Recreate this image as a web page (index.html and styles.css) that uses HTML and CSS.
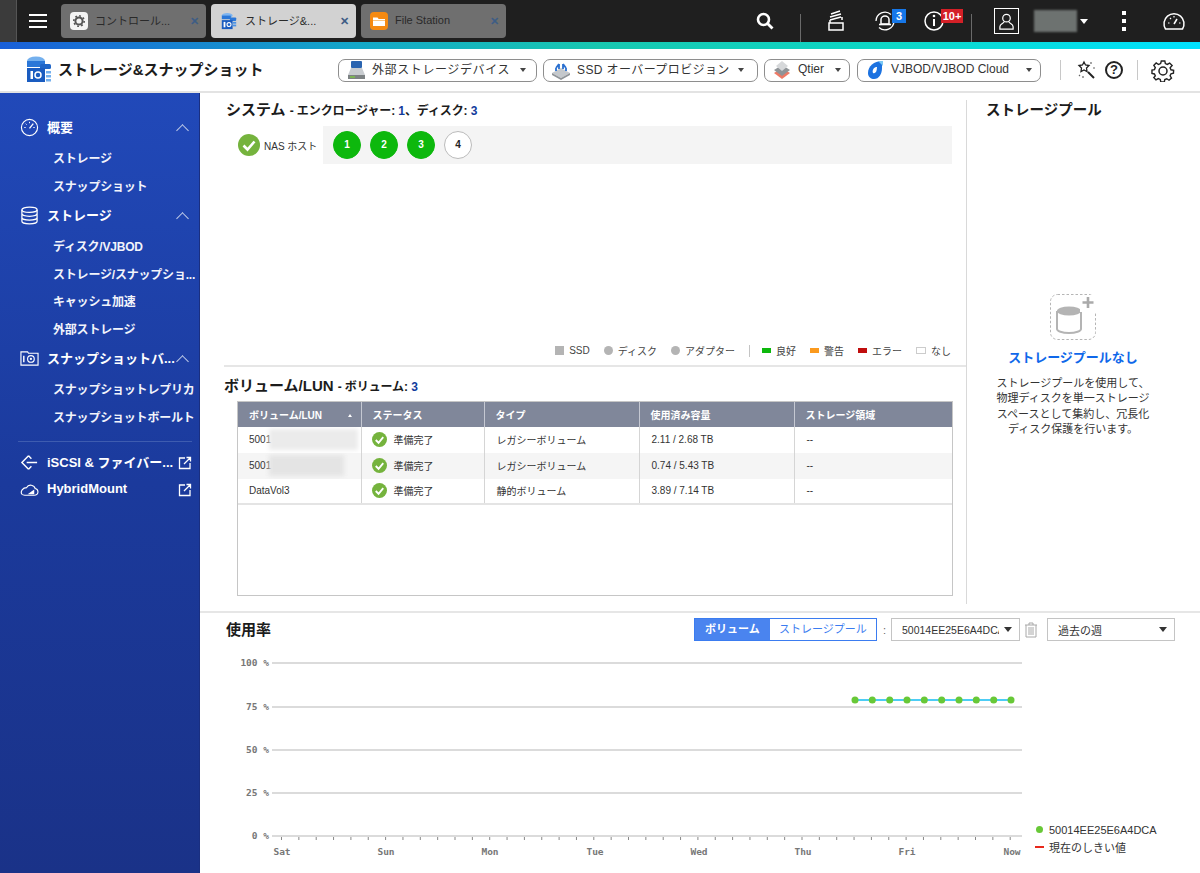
FILE: index.html
```html
<!DOCTYPE html>
<html lang="ja">
<head>
<meta charset="utf-8">
<title>ストレージ&amp;スナップショット</title>
<link rel="stylesheet" href="styles.css">
</head>
<body>
<div class="app">
  <header class="topbar">
    <div class="corner"></div>
    <div class="burger"><span></span><span></span><span></span></div>
    <div class="tabs">
      <div class="tab">
        <svg class="tabicon" viewBox="0 0 18 18"><rect width="18" height="18" rx="4" fill="#f4f4f4"/><circle cx="9" cy="9" r="3.6" fill="none" stroke="#555" stroke-width="2"/><circle cx="9" cy="9" r="5.2" fill="none" stroke="#555" stroke-width="1.6" stroke-dasharray="1.8 2.2"/></svg>
        <span class="tabtext">コントロール...</span><span class="tabx">✕</span>
      </div>
      <div class="tab active">
        <svg class="tabicon" viewBox="0 0 18 20"><ellipse cx="7" cy="4" rx="6" ry="3" fill="#7db4f0"/><rect x="1" y="4" width="10" height="4" fill="#2a77d8"/><rect x="10" y="6" width="7" height="4" rx="1" fill="#2a77d8"/><rect x="1" y="9" width="12" height="10" fill="#1a5cc0"/><rect x="13" y="11" width="4" height="2" fill="#4a92e6"/><rect x="13" y="14" width="4" height="2" fill="#4a92e6"/><rect x="3" y="11" width="2" height="6" fill="#fff"/><circle cx="9" cy="14" r="2.2" fill="none" stroke="#fff" stroke-width="1.2"/></svg>
        <span class="tabtext">ストレージ&amp;...</span><span class="tabx">✕</span>
      </div>
      <div class="tab">
        <svg class="tabicon" viewBox="0 0 18 18"><rect width="18" height="18" rx="4" fill="#f58a12"/><path d="M3 5.5h4.5l1.2 1.5H15v7H3z" fill="#fff"/><path d="M3 8h12v1H3z" fill="#f9c37e"/></svg>
        <span class="tabtext">File Station</span><span class="tabx">✕</span>
      </div>
    </div>
    <div class="tools">
      <svg class="t-search" viewBox="0 0 18 18"><circle cx="7.5" cy="7.5" r="5.5" fill="none" stroke="#fff" stroke-width="2.6"/><path d="M11.5 11.5l5 5" stroke="#fff" stroke-width="2.8"/></svg>
      <i class="t-sep one"></i>
      <svg class="t-stack" viewBox="0 0 18 22"><path d="M2 13h14v7H2zM3 10l11-3M3 7l11-3M4 4l9-3M3 13v-3M15 7v3" fill="none" stroke="#fff" stroke-width="1.5"/></svg>
      <div class="t-badged bg">
        <svg viewBox="0 0 22 22"><path d="M2 11a9 9 0 0 1 15-6.500M20 11a9 9 0 0 1-15 6.500" fill="none" stroke="#fff" stroke-width="1.3"/><path d="M7 14V9.500a4 3.500 0 0 1 8 0V14z" fill="none" stroke="#fff" stroke-width="1.500"/><path d="M5 14.500h12" stroke="#fff" stroke-width="1.600"/></svg>
        <b class="badge blue">3</b>
      </div>
      <div class="t-badged info">
        <svg viewBox="0 0 22 22"><circle cx="11" cy="11" r="9" fill="none" stroke="#fff" stroke-width="1.5"/><path d="M11 9v7" stroke="#fff" stroke-width="2"/><circle cx="11" cy="6" r="1.3" fill="#fff"/></svg>
        <b class="badge red">10+</b>
      </div>
      <i class="t-sep two"></i>
      <div class="avatar"><svg viewBox="0 0 18 20"><circle cx="9" cy="6.5" r="4" fill="none" stroke="#fff" stroke-width="1.3"/><path d="M6.5 10c0 2-4.500 2.500-4.500 5.500V18h14v-2.500C16 12.500 11.500 12 11.500 10" fill="none" stroke="#fff" stroke-width="1.3"/></svg></div>
      <div class="userblur"></div>
      <i class="caret white"></i>
      <div class="dots"><span></span><span></span><span></span></div>
      <svg class="t-gauge" viewBox="0 0 24 22"><path d="M3.500 19a10 10 0 1 1 17 0z" fill="none" stroke="#fff" stroke-width="1.5"/><path d="M12 14l3-5" stroke="#fff" stroke-width="1.5"/><path d="M6 13h1.500M17 13h1.500M8 8l1 1M12 6v1.500" stroke="#fff" stroke-width="1.200"/></svg>
    </div>
  </header>
  <div class="rainbow"></div>
  <div class="apphead">
    <svg class="logo" viewBox="0 0 28 28"><ellipse cx="11" cy="5" rx="9" ry="4.500" fill="#74b0ee"/><rect x="2" y="5" width="18" height="6" fill="#2a77d8"/><rect x="15" y="8" width="11" height="5" rx="1.500" fill="#1f66c8"/><rect x="2" y="12" width="18" height="14" fill="#1a5cc0"/><rect x="21" y="15" width="5" height="2.500" fill="#74b0ee"/><rect x="21" y="19" width="5" height="2.500" fill="#74b0ee"/><rect x="21" y="23" width="5" height="2.500" fill="#74b0ee"/><rect x="5.500" y="15" width="2.500" height="8" fill="#fff"/><circle cx="13" cy="19" r="3" fill="none" stroke="#fff" stroke-width="1.500"/></svg>
    <h1 class="apptitle">ストレージ&amp;スナップショット</h1>
    <div class="headbtns">
      <div class="hbtn w-ext">
        <svg class="hi" viewBox="0 0 20 20"><rect x="5" y="1" width="11" height="7" rx="1" fill="#2a64b0"/><path d="M5 8h11l3 7H2z" fill="#c8ccd0"/><rect x="2" y="15" width="17" height="4" fill="#7d8284"/><rect x="4" y="16.200" width="5" height="1.600" fill="#7cc04a"/></svg>
        <span>外部ストレージデバイス</span><i class="caret"></i>
      </div>
      <div class="hbtn w-ssd">
        <svg class="hi" viewBox="0 0 20 20"><path d="M1 13l9-5 9 5-9 5z" fill="#c4c8cc"/><path d="M1 13v2l9 5 9-5v-2l-9 5z" fill="#8f9498"/><path d="M5 8v3M8 4v5M12 4v5M15 8v3M5 8l3-4M15 8l-3-4" stroke="#2a70d0" stroke-width="1.800" fill="none"/></svg>
        <span>SSD オーバープロビジョン</span><i class="caret"></i>
      </div>
      <div class="hbtn w-qt">
        <svg class="hi" viewBox="0 0 20 20"><path d="M2 13l8-5 8 5-8 6z" fill="#ec7a66"/><path d="M2 10l8-5 8 5-8 6z" fill="#8f9498"/><path d="M4 6l6-5 6 5-6 5z" fill="#d6d8da"/></svg>
        <span>Qtier</span><i class="caret"></i>
      </div>
      <div class="hbtn w-vj">
        <svg class="hi" viewBox="0 0 20 20"><path d="M17 1C9 1 3 6 3 13c0 4 3 6 6 6 5 0 8-5 8-11z" fill="#1c72e0"/><path d="M11 7c-3 1-4 4-3 6 2 1 4-1 4-6z" fill="#fff"/><path d="M13 1h5v5z" fill="#7cc8f4"/></svg>
        <span>VJBOD/VJBOD Cloud</span><i class="caret"></i>
      </div>
    </div>
    <i class="hsep s1"></i>
    <svg class="hic wand" viewBox="0 0 20 20"><path d="M12 12l6 6" stroke="#222" stroke-width="2"/><path d="M8 2l1.500 3 3.500.5-2.500 2.500.5 3.500-3-1.500-3 1.500.5-3.500L3 5.500 6.500 5z" fill="none" stroke="#222" stroke-width="1.300"/><path d="M15 2v2M17 8h2M3 15l1 1M7 16v2" stroke="#666" stroke-width="1.200"/></svg>
    <div class="help">?</div>
    <i class="hsep s2"></i>
    <svg class="hic gear" viewBox="0 0 24 24"><path d="M10 2h4l.6 3 2.200 1 2.700-1.600 2.800 2.800L20 9.800l1 2.200 3 .6-.2 3.400-2.800.6-1 2.200 1.600 2.700-2.800 2.400-2.600-1.700-2.200.9-.6 2.800h-4L8.800 23l-2.200-1-2.700 1.600-2.400-2.700L3.200 19l-1-2.200-2.800-.6v-3.800l2.800-.6 1-2.200L1.500 7l2.700-2.700L6.800 6l2.400-1z" transform="translate(1.500 1.200) scale(.88)" fill="none" stroke="#222" stroke-width="1.600"/><circle cx="12" cy="13" r="4" fill="none" stroke="#222" stroke-width="1.500"/></svg>
  </div>
  <div class="body">
    <nav class="side">
      <div class="navhead">
        <svg class="ni" viewBox="0 0 20 20"><circle cx="10" cy="10" r="8.500" fill="none" stroke="#fff" stroke-width="1.200"/><path d="M10 11l4-5" stroke="#fff" stroke-width="1.400"/><path d="M4.500 10H6M14 10h1.500M6 6l1 1M10 4v1.500" stroke="#fff" stroke-width="1"/></svg>
        <span class="navtext">概要</span><i class="chev"></i>
      </div>
      <div class="navsub">ストレージ</div>
      <div class="navsub">スナップショット</div>
      <div class="navhead">
        <svg class="ni" viewBox="0 0 20 20"><ellipse cx="10" cy="4" rx="8" ry="2.800" fill="none" stroke="#fff" stroke-width="1.300"/><path d="M2 4v12c0 1.500 3.500 2.800 8 2.800s8-1.300 8-2.800V4M2 8c0 1.500 3.500 2.800 8 2.800S18 9.500 18 8M2 12c0 1.500 3.500 2.800 8 2.800s8-1.300 8-2.800" fill="none" stroke="#fff" stroke-width="1.300"/></svg>
        <span class="navtext">ストレージ</span><i class="chev"></i>
      </div>
      <div class="navsub">ディスク/VJBOD</div>
      <div class="navsub">ストレージ/スナップショ...</div>
      <div class="navsub">キャッシュ加速</div>
      <div class="navsub">外部ストレージ</div>
      <div class="navhead">
        <svg class="ni" viewBox="0 0 20 20"><path d="M1 3h7l1 1.500h10V17H1z" fill="none" stroke="#fff" stroke-width="1.200"/><path d="M4 7v7" stroke="#fff" stroke-width="1.500"/><circle cx="11.500" cy="10.500" r="3.500" fill="none" stroke="#fff" stroke-width="1.200"/><circle cx="11.500" cy="10.500" r="1.200" fill="#fff"/></svg>
        <span class="navtext">スナップショットバ...</span><i class="chev"></i>
      </div>
      <div class="navsub">スナップショットレプリカ</div>
      <div class="navsub">スナップショットボールト</div>
      <hr class="navdiv">
      <div class="navhead">
        <svg class="ni" viewBox="0 0 20 20"><path d="M9 3l-7 7 7 7M9 3l3 3M9 17l3-3M7 10h11" fill="none" stroke="#fff" stroke-width="1.500"/></svg>
        <span class="navtext">iSCSI &amp; ファイバー...</span>
        <svg class="ext" viewBox="0 0 14 14"><path d="M7 2H1.500v10.500H12V7M6 8l6.500-6.500M8.500 1.500h4v4" fill="none" stroke="#fff" stroke-width="1.300"/></svg>
      </div>
      <div class="navhead">
        <svg class="ni" viewBox="0 0 20 20"><path d="M5 16h10c5 0 5-6 1-7-1-4-7-5-9-1C3 8 0 12 2 15c.8 1 2 1 3 1z" fill="none" stroke="#fff" stroke-width="1.200"/><path d="M8 15l7-5v5z" fill="#fff"/></svg>
        <span class="navtext">HybridMount</span>
        <svg class="ext" viewBox="0 0 14 14"><path d="M7 2H1.500v10.500H12V7M6 8l6.500-6.500M8.500 1.500h4v4" fill="none" stroke="#fff" stroke-width="1.300"/></svg>
      </div>
    </nav>
    <main class="main">
      <div class="upper">
        <div class="leftcol">
          <section class="system">
            <h2 class="sectitle">システム <small>- エンクロージャー: <em>1</em>、ディスク: <em>3</em></small></h2>
            <div class="nasrow">
              <div class="naslabel">
                <svg class="bigcheck" viewBox="0 0 22 22"><circle cx="11" cy="11" r="11" fill="#75b33d"/><path d="M5.500 11.500l4 4 7-8" fill="none" stroke="#fff" stroke-width="2.600"/></svg>
                <span>NAS ホスト</span>
              </div>
              <div class="bays">
                <span class="bay ok">1</span><span class="bay ok">2</span><span class="bay ok">3</span><span class="bay">4</span>
              </div>
            </div>
            <div class="legend">
              <span class="lg"><i class="sq"></i>SSD</span>
              <span class="lg"><i class="ci"></i>ディスク</span>
              <span class="lg"><i class="ci"></i>アダプター</span>
              <i class="lgsep"></i>
              <span class="lg"><i class="bar green"></i>良好</span>
              <span class="lg"><i class="bar orange"></i>警告</span>
              <span class="lg"><i class="bar dred"></i>エラー</span>
              <span class="lg"><i class="bar none"></i>なし</span>
            </div>
          </section>
          <section class="volumes">
            <h2 class="sectitle">ボリューム/LUN <small>- ボリューム: <em>3</em></small></h2>
            <div class="tablewrap">
              <table class="vt">
                <colgroup><col class="c1"><col class="c2"><col class="c3"><col class="c4"><col class="c5"></colgroup>
                <thead><tr><th>ボリューム/LUN<i class="sort"></i></th><th>ステータス</th><th>タイプ</th><th>使用済み容量</th><th>ストレージ領域</th></tr></thead>
                <tbody>
                  <tr>
                    <td><span>5001</span><i class="blur b1"></i></td>
                    <td><span class="st"><svg class="chk" viewBox="0 0 16 16"><circle cx="8" cy="8" r="8" fill="#75b33d"/><path d="M4 8.500l3 3 5-6" fill="none" stroke="#fff" stroke-width="2"/></svg>準備完了</span></td>
                    <td>レガシーボリューム</td><td>2.11 / 2.68 TB</td><td>--</td>
                  </tr>
                  <tr class="alt">
                    <td><span>5001</span><i class="blur b2"></i></td>
                    <td><span class="st"><svg class="chk" viewBox="0 0 16 16"><circle cx="8" cy="8" r="8" fill="#75b33d"/><path d="M4 8.500l3 3 5-6" fill="none" stroke="#fff" stroke-width="2"/></svg>準備完了</span></td>
                    <td>レガシーボリューム</td><td>0.74 / 5.43 TB</td><td>--</td>
                  </tr>
                  <tr>
                    <td>DataVol3</td>
                    <td><span class="st"><svg class="chk" viewBox="0 0 16 16"><circle cx="8" cy="8" r="8" fill="#75b33d"/><path d="M4 8.500l3 3 5-6" fill="none" stroke="#fff" stroke-width="2"/></svg>準備完了</span></td>
                    <td>静的ボリューム</td><td>3.89 / 7.14 TB</td><td>--</td>
                  </tr>
                </tbody>
              </table>
            </div>
          </section>
        </div>
        <aside class="rightcol">
          <h2 class="sectitle pooltitle">ストレージプール</h2>
          <div class="empty">
            <div class="emptyicon">
              <svg viewBox="0 0 46 46"><rect x=".5" y=".5" width="45" height="45" rx="7" fill="none" stroke="#b5b5b5" stroke-dasharray="2.500 2"/><path d="M7 17v18c0 2 5 4 12 4s12-2 12-4V17" fill="none" stroke="#b4b4b4" stroke-width="2"/><ellipse cx="19" cy="17" rx="12" ry="4.500" fill="#b4b4b4"/><rect x="30" y="1" width="16" height="17" fill="#fff"/><path d="M38 3v11M32.500 8.500h11" stroke="#aaa" stroke-width="2.600"/></svg>
            </div>
            <div class="emptytitle">ストレージプールなし</div>
            <p class="emptytext">ストレージプールを使用して、<br>物理ディスクを単一ストレージ<br>スペースとして集約し、冗長化<br>ディスク保護を行います。</p>
          </div>
        </aside>
      </div>
      <section class="usage">
        <div class="usagehead">
          <h2 class="sectitle">使用率</h2>
          <div class="controls">
            <div class="seg"><span class="on">ボリューム</span><span>ストレージプール</span></div>
            <span class="colon">:</span>
            <div class="sel s-vol"><span>50014EE25E6A4DCA</span><i class="caret dark"></i></div>
            <svg class="trash" viewBox="0 0 14 16"><path d="M1 3h12M5 3V1h4v2M2 3v12h10V3M5 5v8M7 5v8M9 5v8" fill="none" stroke="#a8a8a8" stroke-width="1"/></svg>
            <div class="sel s-time"><span>過去の週</span><i class="caret dark"></i></div>
          </div>
        </div>
        <div class="chartrow">
          <svg class="chart" viewBox="0 0 800 240" width="800" height="240">
            <g class="grid">
              <line x1="46" x2="796" y1="30" y2="30"/><line x1="46" x2="796" y1="74" y2="74"/><line x1="46" x2="796" y1="117" y2="117"/><line x1="46" x2="796" y1="160" y2="160"/><line x1="46" x2="796" y1="203" y2="203"/>
            </g>
            <line class="ticks" x1="55" x2="796" y1="205.500" y2="205.500"/>
            <g class="ylab">
              <text x="43" y="33">100 %</text><text x="43" y="77">75 %</text><text x="43" y="120">50 %</text><text x="43" y="163">25 %</text><text x="43" y="206">0 %</text>
            </g>
            <g class="xlab">
              <text x="56" y="222">Sat</text><text x="160" y="222">Sun</text><text x="264" y="222">Mon</text><text x="369" y="222">Tue</text><text x="473" y="222">Wed</text><text x="577" y="222">Thu</text><text x="681" y="222">Fri</text><text x="786" y="222">Now</text>
            </g>
            <line class="series" x1="629" x2="785" y1="67" y2="67"/>
            <g class="pts">
              <circle cx="629" cy="67" r="3.500"/><circle cx="646.300" cy="67" r="3.500"/><circle cx="663.700" cy="67" r="3.500"/><circle cx="681" cy="67" r="3.500"/><circle cx="698.300" cy="67" r="3.500"/><circle cx="715.700" cy="67" r="3.500"/><circle cx="733" cy="67" r="3.500"/><circle cx="750.300" cy="67" r="3.500"/><circle cx="767.700" cy="67" r="3.500"/><circle cx="785" cy="67" r="3.500"/>
            </g>
          </svg>
          <div class="chartlegend">
            <div class="cl"><i class="dot"></i>50014EE25E6A4DCA</div>
            <div class="cl"><i class="dash"></i>現在のしきい値</div>
          </div>
        </div>
      </section>
    </main>
  </div>
</div>
</body>
</html>
```
FILE: styles.css
```css
* { box-sizing: border-box; }
html, body { margin: 0; height: 100%; overflow: hidden; }
body { font-family: "Liberation Sans", "Noto Sans CJK JP", sans-serif; color: #222; background: #fff; }
h1, h2, p { margin: 0; }
i { display: block; font-style: normal; }
.app { width: 1200px; height: 873px; display: flex; flex-direction: column; overflow: hidden; }

.topbar { height: 42px; flex: none; background: #1f1f1f; display: flex; align-items: center; position: relative; }
.corner { width: 17px; height: 42px; background: #3b3b3b; border-right: 1px solid #555; flex: none; }
.burger { margin-left: 12px; width: 18px; display: flex; flex-direction: column; gap: 4px; flex: none; }
.burger span { height: 2px; background: #fff; }
.tabs { display: flex; gap: 5px; margin-left: 14px; flex: none; }
.tab { width: 145px; height: 34px; background: #6f6f6f; border-radius: 4px; display: flex; align-items: center; padding: 0 6px 0 9px; color: #2a2a2a; font-size: 11px; }
.tab.active { background: #d2d2d2; }
.tabicon { width: 18px; height: 18px; flex: none; }
.tabtext { margin-left: 7px; padding-bottom: 2px; flex: 1; min-width: 0; white-space: nowrap; }
.tabx { color: #3d5d85; font-size: 11px; font-weight: bold; flex: none; margin-right: 1px; }
.tools { flex: 1; display: flex; align-items: center; height: 42px; }
.t-search { width: 18px; height: 18px; margin-left: 250px; flex: none; }
.t-sep { width: 1px; height: 28px; background: #6a6a6a; align-self: flex-end; flex: none; }
.t-sep.one { margin-left: 26px; }
.t-stack { width: 18px; height: 22px; margin-left: 26px; flex: none; }
.t-badged { position: relative; width: 22px; height: 22px; flex: none; }
.t-badged svg { width: 22px; height: 22px; display: block; }
.t-badged.bg { margin-left: 29px; }
.t-badged.info { margin-left: 27px; }
.badge { position: absolute; top: -1px; color: #fff; font-size: 11px; line-height: 14px; text-align: center; }
.badge.blue { left: 18px; width: 14px; background: #1677e8; }
.badge.red { left: 18px; width: 22px; background: #d42027; }
.t-sep.two { margin-left: 26px; }
.avatar { width: 25px; height: 26px; border: 1px solid #fff; margin-left: 22px; display: flex; align-items: center; justify-content: center; flex: none; }
.avatar svg { width: 17px; height: 19px; }
.userblur { width: 43px; height: 22px; background: #6d7270; filter: blur(1px); margin-left: 15px; flex: none; }
.caret { width: 0; height: 0; border-left: 3.500px solid transparent; border-right: 3.500px solid transparent; border-top: 4px solid #444; flex: none; }
.caret.white { border-top-color: #fff; margin-left: 3px; border-left-width: 4px; border-right-width: 4px; border-top-width: 5px; }
.dots { display: flex; flex-direction: column; gap: 4px; margin-left: 34px; flex: none; }
.dots span { width: 3.500px; height: 4px; background: #fff; }
.t-gauge { width: 24px; height: 22px; margin-left: 36px; flex: none; }

.rainbow { height: 7px; flex: none; background: linear-gradient(90deg, #1a5fd8 0%, #14a8c8 30%, #18c8b0 50%, #0cd8c8 75%, #00e2ff 100%); }

.apphead { height: 44px; flex: none; border-bottom: 2px solid #e3e3e3; display: flex; align-items: center; background: #fff; }
.logo { width: 28px; height: 28px; margin-left: 25px; flex: none; }
.apptitle { font-size: 15px; font-weight: bold; margin-left: 5px; margin-bottom: 4px; width: 280px; color: #1c1c1c; white-space: nowrap; }
.headbtns { display: flex; gap: 6px; flex: none; }
.hbtn { height: 23px; border: 1px solid #8e8e8e; border-radius: 7px; display: flex; align-items: center; padding: 0 8px 0 7px; font-size: 12px; color: #333; background: #fff; justify-content: space-between; white-space: nowrap; }
.hi { width: 20px; height: 20px; flex: none; margin-right: 6px; }
.hbtn span { flex: 1; padding-bottom: 3px; }
.w-ext { width: 199px; padding-right: 10px; letter-spacing: .6px; }
.w-ssd { width: 215px; padding-right: 13px; letter-spacing: .4px; }
.w-qt { width: 86px; }
.w-vj { width: 184px; margin-left: 1px; }
.hsep { width: 1px; height: 20px; background: #c8c8c8; flex: none; }
.s1 { margin-left: 19px; }
.hic { flex: none; }
.wand { width: 20px; height: 20px; margin-left: 15px; }
.help { width: 18px; height: 18px; border: 2px solid #222; border-radius: 50%; font-size: 13px; font-weight: bold; line-height: 14px; text-align: center; margin-left: 9px; flex: none; }
.s2 { margin-left: 14px; }
.gear { width: 24px; height: 24px; margin-left: 13px; }

.body { flex: 1; min-height: 0; display: flex; }
.side { width: 200px; flex: none; background: linear-gradient(180deg, #2149b9 0%, #1b3a9c 50%, #1a3288 100%); color: #fff; padding: 21px 0 0 0; border-right: 1px solid #1a2f80; }
.navhead { height: 27px; display: flex; align-items: center; padding-left: 20px; padding-right: 10px; font-size: 13px; font-weight: bold; }
.navhead + .navsub { margin-top: 6px; }
.ni { width: 19px; height: 19px; flex: none; margin-right: 8px; }
.navtext { width: 130px; flex: none; padding-bottom: 3px; white-space: nowrap; }
.chev { width: 9px; height: 9px; border-left: 1px solid #c0cbe8; border-top: 1px solid #c0cbe8; transform: rotate(45deg); margin-left: 1px; margin-top: 5px; flex: none; }
.ext { width: 14px; height: 14px; margin-left: 1px; flex: none; }
.navsub { height: 27.500px; line-height: 24px; padding-left: 53px; font-size: 12px; font-weight: bold; letter-spacing: -.2px; white-space: nowrap; color: #f2f4fb; }
.navdiv { border: 0; border-top: 1px solid #3e5cb0; margin: 8px 7px 7px 18px; }

.main { flex: 1; min-width: 0; display: flex; flex-direction: column; }
.upper { height: 520px; flex: none; border-bottom: 2px solid #e6e6e6; display: flex; padding-top: 7px; }
.leftcol { width: 767px; height: 504px; border-right: 1px solid #d9d9d9; flex: none; display: flex; flex-direction: column; }
.sectitle { font-size: 15px; font-weight: bold; color: #1c1c1c; line-height: 20px; }
.sectitle small { font-size: 12px; letter-spacing: -.1px; }
.sectitle em { font-style: normal; color: #113b9c; }
.system { height: 267px; flex: none; border-bottom: 2px solid #e6e6e6; margin-left: 24px; padding-left: 2px; display: flex; flex-direction: column; }
.nasrow { display: flex; margin-top: 5px; height: 38px; padding-right: 14px; }
.naslabel { width: 97px; flex: none; display: flex; align-items: center; padding-left: 12px; font-size: 10px; color: #333; gap: 4px; white-space: nowrap; }
.bigcheck { width: 22px; height: 22px; flex: none; }
.bays { flex: 1; background: #f4f4f4; display: flex; align-items: center; padding-left: 10px; gap: 9px; }
.bay { width: 28px; height: 28px; border-radius: 50%; border: 1px solid #bbb; background: #fff; font-size: 10px; font-weight: bold; text-align: center; line-height: 26px; flex: none; }
.bay.ok { background: #0db80d; border-color: #0db80d; color: #fff; }
.legend { margin-top: auto; padding-bottom: 5px; padding-right: 15px; display: flex; justify-content: flex-end; align-items: center; font-size: 10px; color: #444; height: 24px; }
.lg { display: flex; align-items: center; margin-left: 14px; white-space: nowrap; }
.lg i { margin-right: 5px; flex: none; }
.sq { width: 9px; height: 9px; background: #b4b4b4; }
.ci { width: 9px; height: 9px; border-radius: 50%; background: #b4b4b4; }
.bar { width: 9px; height: 5px; }
.green { background: #0db80d; }
.orange { background: #fb9a1e; }
.dred { background: #c00d0d; }
.bar.none { height: 7px; width: 10px; border: 1px solid #ccc; background: #fff; }
.lgsep { width: 1px; height: 12px; background: #c4c4c4; margin-left: 14px; margin-right: -2px; flex: none; }

.volumes { margin-left: 24px; padding-top: 9px; flex: 1; }
.tablewrap { margin: 4px 13px 0 13px; height: 195px; border: 1px solid #c6c6c6; overflow: hidden; }
.vt { width: 100%; table-layout: fixed; border-collapse: collapse; font-size: 10px; color: #333; }
.c1 { width: 123px; }
.c2 { width: 123px; }
.c3 { width: 155px; }
.c4 { width: 155px; }
.vt th { height: 25px; background: #80879a; color: #fff; text-align: left; font-weight: bold; padding: 0 11px; border-right: 1px solid #c5c8d2; position: relative; }
.vt th:last-child { border-right: 0; }
.vt td { height: 25.800px; padding: 0 12px; border-right: 1px solid #d5d5d5; white-space: nowrap; position: relative; overflow: hidden; }
.vt td:first-child { padding-left: 11px; }
.vt td:last-child { border-right: 0; }
.vt tbody tr:last-child td { border-bottom: 2px solid #e4e4e4; }
.alt td { background: #f5f5f5; }
.sort { position: absolute; right: 9px; top: 12px; width: 0; height: 0; border-left: 2.500px solid transparent; border-right: 2.500px solid transparent; border-bottom: 3px solid #fff; }
.blur { position: absolute; left: 31px; top: 2px; height: 21px; background: #ebebeb; filter: blur(2px); }
.b1 { width: 89px; }
.b2 { width: 75px; background: #e4e4e4; }
.st { display: flex; align-items: center; gap: 7px; margin-left: -2px; }
.chk { width: 15px; height: 15px; flex: none; }

.rightcol { flex: 1; min-width: 0; padding-left: 19px; }
.pooltitle { font-size: 14.500px; }
.empty { width: 170px; margin-left: 2px; margin-top: 174px; display: flex; flex-direction: column; align-items: center; }
.emptyicon { width: 46px; height: 46px; }
.emptyicon svg { width: 46px; height: 46px; display: block; }
.emptytitle { color: #0f68ea; font-size: 13px; font-weight: bold; margin-top: 9px; line-height: 18px; white-space: nowrap; }
.emptytext { font-size: 11px; line-height: 15.500px; text-align: center; color: #333; margin-top: 8.500px; white-space: nowrap; }

.usage { flex: 1; min-height: 0; display: flex; flex-direction: column; padding-left: 26px; }
.usagehead { display: flex; justify-content: space-between; align-items: center; height: 33px; padding-right: 25px; }
.controls { display: flex; align-items: center; font-size: 11px; color: #333; }
.seg { display: flex; height: 23px; border: 1px solid #3b7cf0; }
.seg span { display: block; line-height: 20px; color: #3b7cf0; white-space: nowrap; }
.seg .on { width: 75px; background: #4a84ef; color: #fff; font-weight: bold; text-align: center; }
.seg span:last-child { width: 106px; text-align: center; }
.colon { margin: 0 5px 0 6px; color: #666; }
.sel { height: 23px; border: 1px solid #c4c4c4; display: flex; align-items: center; padding: 0 7px 0 10px; background: #fff; }
.sel span { flex: 1; overflow: hidden; white-space: nowrap; min-width: 0; font-size: 10.500px; }
.sel .caret { margin-left: 5px; border-top-color: #333; border-left-width: 4px; border-right-width: 4px; border-top-width: 5px; }
.s-vol { width: 129px; }
.s-time { width: 128px; }
.s-time span { font-size: 11px; }
.trash { width: 14px; height: 16px; margin: 0 9px 0 4px; flex: none; }
.chartrow { display: flex; flex: 1; min-height: 0; }
.chart { flex: none; display: block; margin-top: -13px; width: 800px; height: 240px; }
.grid line { stroke: #b8b8b8; stroke-width: 1.200; }
.ticks { stroke: #888; stroke-width: 3; stroke-dasharray: 1 16.350; }
.ylab text, .xlab text { font-family: "DejaVu Sans Mono", monospace; font-size: 9.500px; font-weight: bold; fill: #777; }
.ylab text { text-anchor: end; }
.xlab text { text-anchor: middle; }
.series { stroke: #12bdf2; stroke-width: 1.500; }
.pts circle { fill: #68c837; }
.chartlegend { margin-top: 176px; margin-left: 8px; font-size: 11px; color: #333; display: flex; flex-direction: column; gap: 2px; white-space: nowrap; }
.cl { display: flex; align-items: center; height: 15px; }
.dot { width: 7px; height: 7px; border-radius: 50%; background: #68c837; margin: 0 6px 0 2px; flex: none; }
.dash { width: 9px; height: 2px; background: #e8281c; margin: 0 5px 0 1px; flex: none; }
```
